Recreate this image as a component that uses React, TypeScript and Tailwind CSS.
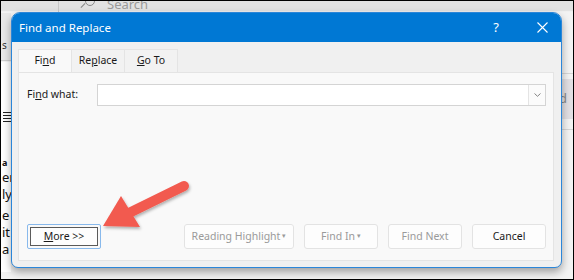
import React from "react";

const font = { fontFamily: '"Noto Sans", "Open Sans", sans-serif' };

function Btn({ children, dim, w }: { children: React.ReactNode; dim?: boolean; w: string }) {
  return (
    <div
      className={`${w} h-[25px] flex items-center justify-center rounded-[3px] border border-[#e3e3e3] bg-[#fdfdfd] text-[10.5px] ${
        dim ? "text-[#9a9a9a]" : "text-[#1a1a1a]"
      }`}
    >
      {children}
    </div>
  );
}

export default function App() {
  return (
    <div
      className="relative w-[574px] h-[280px] overflow-hidden border border-black bg-[#f3f3f3]"
      style={font}
    >
      {/* backdrop: Word window behind the dialog */}
      <div className="absolute left-0 top-0 w-full h-[11px] bg-[#e2e2e2] border-b border-[#f0f0f0]" />
      <div className="absolute left-[57px] top-0 w-px h-[11px] bg-[#c8c8c8]" />
      <div className="absolute left-[84px] top-[-5px] w-[10px] h-[10px] rounded-full border border-[#8a8a8a]" />
      <div className="absolute left-[79px] top-[4px] w-[6px] h-px bg-[#8a8a8a] rotate-[-45deg]" />
      <div className="absolute left-[106px] top-[-5px] text-[13px] leading-[16px] text-[#9a9a9a]">Search</div>
      <div className="absolute left-0 top-[12px] w-[10px] h-[48px] bg-[#e8e8e8] border-b border-[#cfcfcf]" />
      <div className="absolute left-[1px] top-[38px] text-[10px] leading-[12px] text-[#333]">s</div>
      <div className="absolute left-0 top-[61px] w-[10px] h-[210px] bg-white" />
      <div className="absolute left-[2px] top-[111px] w-[8px] flex flex-col gap-[2px]">
        <div className="h-px bg-[#222]" />
        <div className="h-px bg-[#222]" />
        <div className="h-px bg-[#222]" />
        <div className="h-px bg-[#222]" />
      </div>
      <div className="absolute left-[1px] top-[155px] text-[13px] leading-[17px] text-[#111] flex flex-col">
        <span className="h-[13px] text-[9px] leading-[13px] font-bold">a</span>
        <span>em</span>
        <span>ly</span>
        <span className="mt-[4px]">e</span>
        <span>it</span>
        <span>a</span>
      </div>
      <div className="absolute left-[561px] top-[12px] w-[13px] h-[260px] bg-[#f3f3f3]" />
      <div className="absolute left-[561px] top-[72px] w-[13px] h-px bg-[#d6d6d6]" />
      <div className="absolute left-[561px] top-[78px] w-[13px] h-[40px] bg-[#e2dfe3] flex items-center text-[13px] text-[#888]">
        <span className="ml-[-3px]">d</span>
      </div>
      <div className="absolute left-[561px] top-[128px] w-[13px] h-px bg-[#d6d6d6]" />

      {/* dialog window */}
      <div className="absolute left-[10px] top-[11px] w-[551px] h-[256px] flex flex-col rounded-t-[9px] rounded-b-[7px] border border-[#2b86d9] bg-[#f0f0f0] shadow-[0_4px_8px_rgba(0,0,0,0.35)] overflow-hidden">
        <div className="h-[29px] shrink-0 bg-[#0078d4] flex items-center text-white">
          <span className="ml-[7px] text-[11.5px]">Find and Replace</span>
          <span className="ml-auto mr-[38px] text-[13px]">?</span>
          <svg width="11" height="11" viewBox="0 0 11 11" className="mr-[13px]">
            <path d="M0.5 0.5 L10.5 10.5 M10.5 0.5 L0.5 10.5" stroke="white" strokeWidth="1.1" />
          </svg>
        </div>
        <div className="flex-1 flex flex-col pl-[6px] pr-[7px] pt-[7px] pb-[6px]">
          <div className="flex h-[23px] text-[10.5px] text-[#1a1a1a]">
            <div className="w-[54px] flex items-center justify-center bg-[#f9f9f9] border-t border-l border-r border-[#e4e4e4]">
              <span>
                Fi<span className="underline">n</span>d
              </span>
            </div>
            <div className="w-[53px] flex items-center justify-center border-t border-r border-[#e4e4e4] bg-[#f2f2f2]">
              <span>
                Re<span className="underline">p</span>lace
              </span>
            </div>
            <div className="w-[53px] flex items-center justify-center border-t border-r border-[#e4e4e4] bg-[#f2f2f2]">
              <span>
                <span className="underline">G</span>o To
              </span>
            </div>
          </div>
          <div className="flex-1 flex flex-col bg-[#f9f9f9] border border-[#e4e4e4] pl-[8px] pr-[7px] pt-[11px] pb-[11px]">
            <div className="flex items-center h-[22px]">
              <span className="w-[70px] text-[10.5px] text-[#1a1a1a]">
                Fi<span className="underline">n</span>d what:
              </span>
              <div className="flex-1 h-[22px] flex bg-white border border-[#d4d4d4]">
                <div className="flex-1" />
                <div className="w-[17px] border-l border-[#e4e4e4] bg-[#fbfbfb] flex items-center justify-center">
                  <svg width="7" height="4" viewBox="0 0 7 4">
                    <path d="M0.5 0.5 L3.5 3.3 L6.5 0.5" stroke="#777" strokeWidth="0.9" fill="none" />
                  </svg>
                </div>
              </div>
            </div>
            <div className="mt-auto flex items-center">
              <div className="w-[74px] h-[25px] rounded-[2px] border border-[#88b9ec] p-[2px]">
                <div className="w-full h-full border border-[#5a5a5a] bg-[#fdfdfd] flex items-center justify-center text-[10.5px] text-[#1a1a1a]">
                  <span>
                    <span className="underline">M</span>ore &gt;&gt;
                  </span>
                </div>
              </div>
              <div className="ml-auto flex gap-[10px]">
                <Btn w="w-[110px]" dim>
                  Reading Highlight <span className="ml-[2px] text-[7px]">▾</span>
                </Btn>
                <Btn w="w-[74px]" dim>
                  Find In <span className="ml-[2px] text-[7px]">▾</span>
                </Btn>
                <Btn w="w-[74px]" dim>
                  Find Next
                </Btn>
                <Btn w="w-[74px]">Cancel</Btn>
              </div>
            </div>
          </div>
        </div>
      </div>

      {/* annotation arrow */}
      <svg className="absolute left-0 top-0" width="574" height="280" viewBox="0 0 574 280">
        <defs>
          <filter id="sh" x="-20%" y="-20%" width="140%" height="140%">
            <feDropShadow dx="1" dy="2" stdDeviation="1.5" floodColor="#000" floodOpacity="0.3" />
          </filter>
        </defs>
        <g filter="url(#sh)">
          <line x1="183" y1="185" x2="128" y2="212" stroke="#f25a4f" strokeWidth="10" strokeLinecap="round" />
          <polygon points="102,225 120,195 139,226" fill="#f25a4f" />
        </g>
      </svg>
    </div>
  );
}
